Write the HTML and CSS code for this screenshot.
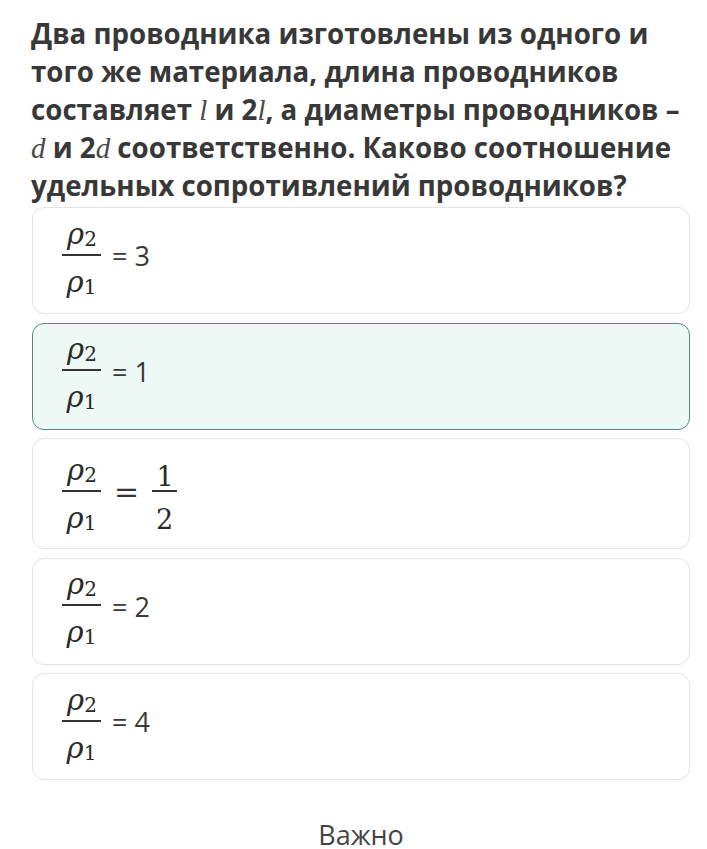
FILE: index.html
```html
<!DOCTYPE html>
<html lang="ru">
<head>
<meta charset="utf-8">
<link rel="stylesheet" href="styles.css">
</head>
<body>
<div class="page">
  <h1 class="question">Два проводника изготовлены из одного и того же материала, длина проводников составляет <span class="mv">l</span> и 2<span class="mv">l</span>, а диаметры проводников – <span class="mv">d</span> и 2<span class="mv">d</span> соответственно. Каково соотношение удельных сопротивлений проводников?</h1>
  <div class="options">
    <div class="option">
      <span class="frac"><span class="num">ρ<sub>2</sub></span><span class="den">ρ<sub>1</sub></span></span>
      <span class="val">= 3</span>
    </div>
    <div class="option selected">
      <span class="frac"><span class="num">ρ<sub>2</sub></span><span class="den">ρ<sub>1</sub></span></span>
      <span class="val">= 1</span>
    </div>
    <div class="option tall">
      <span class="frac"><span class="num">ρ<sub>2</sub></span><span class="den">ρ<sub>1</sub></span></span>
      <span class="meq">=</span>
      <span class="frac digits"><span class="num">1</span><span class="den">2</span></span>
    </div>
    <div class="option">
      <span class="frac"><span class="num">ρ<sub>2</sub></span><span class="den">ρ<sub>1</sub></span></span>
      <span class="val">= 2</span>
    </div>
    <div class="option">
      <span class="frac"><span class="num">ρ<sub>2</sub></span><span class="den">ρ<sub>1</sub></span></span>
      <span class="val">= 4</span>
    </div>
  </div>
  <div class="footer">Важно</div>
</div>
</body>
</html>
```

FILE: styles.css
```css
html, body {
  margin: 0;
  padding: 0;
  background: #ffffff;
}
.page {
  width: 707px;
  padding: 14px 17px 0 32px;
  box-sizing: border-box;
  font-family: "Open Sans", "Liberation Sans", sans-serif;
  color: #363636;
}
.question {
  margin: 0 0 3px -1px;
  font-size: 27.7px;
  line-height: 38px;
  font-weight: 700;
  color: #383838;
}
.mv {
  font-family: "Liberation Serif", "DejaVu Serif", serif;
  font-style: italic;
  font-weight: 400;
  color: #4a4a4a;
  font-size: 29px;
  line-height: 0;
}
.options {
  display: flex;
  flex-direction: column;
  gap: 8.5px;
}
.option {
  height: 107px;
  box-sizing: border-box;
  border: 1px solid #e3e3e3;
  border-radius: 12px;
  background: #fff;
  display: flex;
  align-items: center;
  padding: 0 0 10px 29px;
  gap: 11px;
}
.option.selected {
  background: #edf9f5;
  border-color: #4f8c84;
}
.option.tall {
  height: 111px;
  padding-bottom: 4px;
}
.frac {
  display: inline-flex;
  flex-direction: column;
  align-items: center;
  font-family: "DejaVu Serif", "Liberation Serif", serif;
  font-style: italic;
  color: #2a2a2a;
  font-size: 29px;
  line-height: 28px;
  width: 39px;
}
.frac .num {
  border-bottom: 2px solid #333;
  width: 100%;
  text-align: center;
  height: 30px;
  line-height: 16px;
  box-sizing: border-box;
  padding-left: 1px;
}
.frac .den {
  height: 30px;
  padding-top: 12px;
  box-sizing: content-box;
  margin-bottom: -12px;
}
.frac sub {
  font-style: normal;
  font-size: 20px;
  vertical-align: -2px;
  line-height: 0;
}
.frac.digits {
  font-style: normal;
  width: 25px;
  font-size: 27px;
}
.frac.digits .num {
  line-height: 30px;
}
.frac.digits .den {
  padding-top: 14px;
  margin-bottom: -14px;
}
.val {
  font-size: 27px;
  color: #3a3a3a;
  font-family: "Open Sans", "Liberation Sans", sans-serif;
}
.meq {
  font-family: "DejaVu Serif", "Liberation Serif", serif;
  font-size: 30px;
  color: #333;
  margin: 0 2px;
}
.footer {
  text-align: center;
  padding-top: 37px;
  font-size: 27px;
  line-height: 36px;
  color: #444;
}
```
